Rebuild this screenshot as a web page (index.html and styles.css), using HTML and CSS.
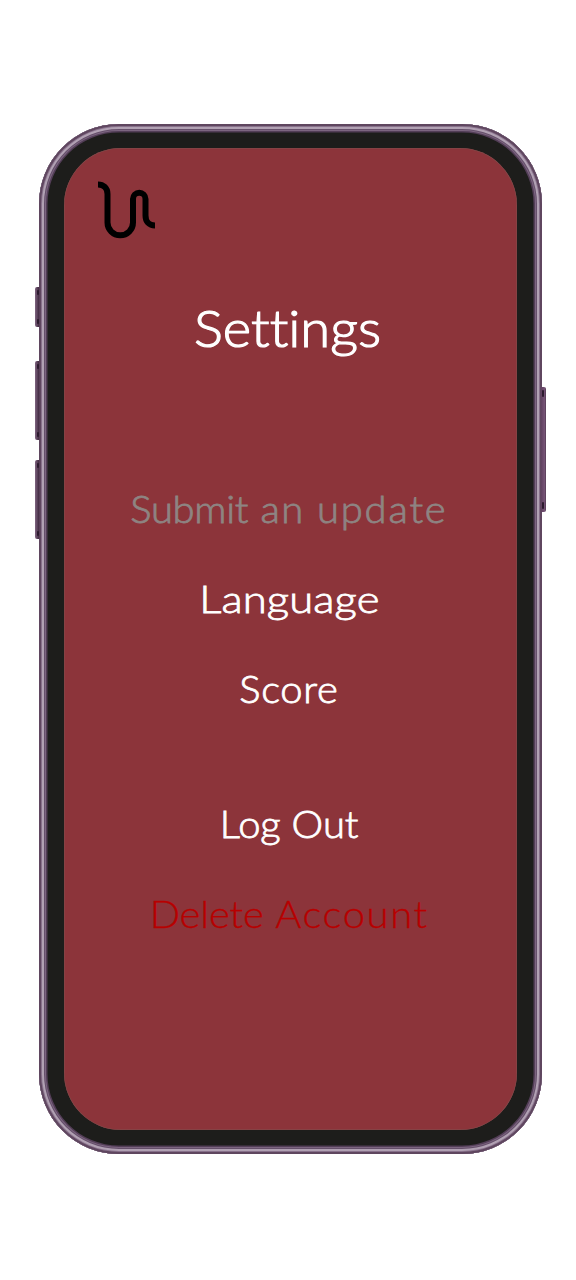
FILE: index.html
```html
<!DOCTYPE html>
<html lang="en">
<head>
<meta charset="utf-8">
<title>Settings</title>
<link rel="stylesheet" href="styles.css">
</head>
<body>
<div class="phone">
  <span class="key key-mute"></span>
  <span class="key key-up"></span>
  <span class="key key-down"></span>
  <span class="key key-power"></span>
  <main class="screen">
    <svg class="logo" viewBox="0 0 58 58" width="58" height="58">
      <path d="M0 3.5C5.500 3.500 9.500 7 9.500 13V41.500A12.750 12.750 0 0 0 35 41.500V18A6.250 6.250 0 0 1 47.500 18V34.500C47.500 40.500 51 44.500 57 44.500"/>
    </svg>
    <h1 class="title">Settings</h1>
    <nav class="menu">
      <a class="item submit"><span class="tight">Submit</span> an <span class="loose">update</span></a>
      <a class="item language">Language</a>
      <a class="item score">Score</a>
      <a class="item logout">Log Out</a>
      <a class="item delete"><span class="tight">Delete</span> <span class="loose">Account</span></a>
    </nav>
  </main>
</div>
</body>
</html>
```
FILE: styles.css
```css
* { box-sizing: border-box; }
body {
  margin: 0;
  height: 1280px;
  padding: 123.5px 0 0 39px;
  background: #fff;
  font-family: Lato, "Liberation Sans", sans-serif;
  font-variant-ligatures: none;
}
.phone {
  position: relative;
  width: 503px;
  height: 1030.5px;
  padding: 24.5px 25px 24px 25px;
  border-radius: 80px;
  background: #1d1d1b;
  box-shadow:
    inset 0 0 0 2px #5f465f,
    inset 0 0 0 3px #88718b,
    inset 0 0 0 5px #b1a1b3,
    inset 0 0 0 6px #66506b,
    inset 0 0 0 7px #7c6580,
    inset 0 0 0 8.5px #533e57;
}
.screen {
  display: flex;
  flex-direction: column;
  align-items: center;
  height: 982px;
  border-radius: 57px;
  background: #8c343a;
  box-shadow: inset 0 0 0 0.5px #80504f;
}
.key {
  position: absolute;
  left: -4px;
  width: 5px;
  border-radius: 2px 0 0 2px;
  background: linear-gradient(90deg, #806581, #493149 70%, #5f465f);
}
.key::before,
.key::after {
  content: "";
  position: absolute;
  left: 2px;
  width: 2px;
  height: 5px;
  border-radius: 1px;
  background: #2c1a2e;
}
.key::before { top: 3px; }
.key::after { bottom: 3px; }
.key-mute { top: 163px; height: 40px; }
.key-up { top: 237px; height: 79px; }
.key-down { top: 336px; height: 79px; }
.key-power {
  left: 502px;
  top: 263px;
  width: 5px;
  height: 125px;
  border-radius: 0 2px 2px 0;
  background: linear-gradient(90deg, #5f405f, #755375 70%, #543b54);
}
.key-power::before,
.key-power::after { left: 1px; height: 7px; }
.logo {
  align-self: flex-start;
  margin: 33px 0 0 34px;
  fill: none;
  stroke: #000;
  stroke-width: 6;
}
.title {
  margin: 58px 5px 0 0;
  height: 60px;
  font-size: 52px;
  font-weight: 300;
  line-height: 60px;
  color: #fff;
  transform: scaleX(1.045);
  -webkit-text-stroke: 1.2px currentColor;
}
.menu {
  display: flex;
  flex-direction: column;
  align-items: center;
  gap: 46px;
  margin-top: 130px;
}
.item {
  height: 44px;
  margin-right: 2px;
  font-size: 37px;
  font-weight: 300;
  line-height: 44px;
  white-space: nowrap;
  color: #fff;
  transform: scaleX(1.08);
  -webkit-text-stroke: 0.8px currentColor;
}
.submit {
  margin-right: 4px;
  letter-spacing: 1.3px;
  color: #8e8482;
}
.submit .tight { letter-spacing: -0.25px; }
.submit .loose { letter-spacing: 1.7px; }
.language { transform: scaleX(1.18); letter-spacing: 0.1px; }
.score { letter-spacing: 0.65px; margin-right: 4px; }
.logout { margin-top: 45px; }
.delete {
  letter-spacing: 0.66px;
  color: #b80000;
  -webkit-text-stroke-width: 0.3px;
}
.delete .tight { letter-spacing: -0.15px; }
.delete .loose { letter-spacing: 1.5px; }
```
